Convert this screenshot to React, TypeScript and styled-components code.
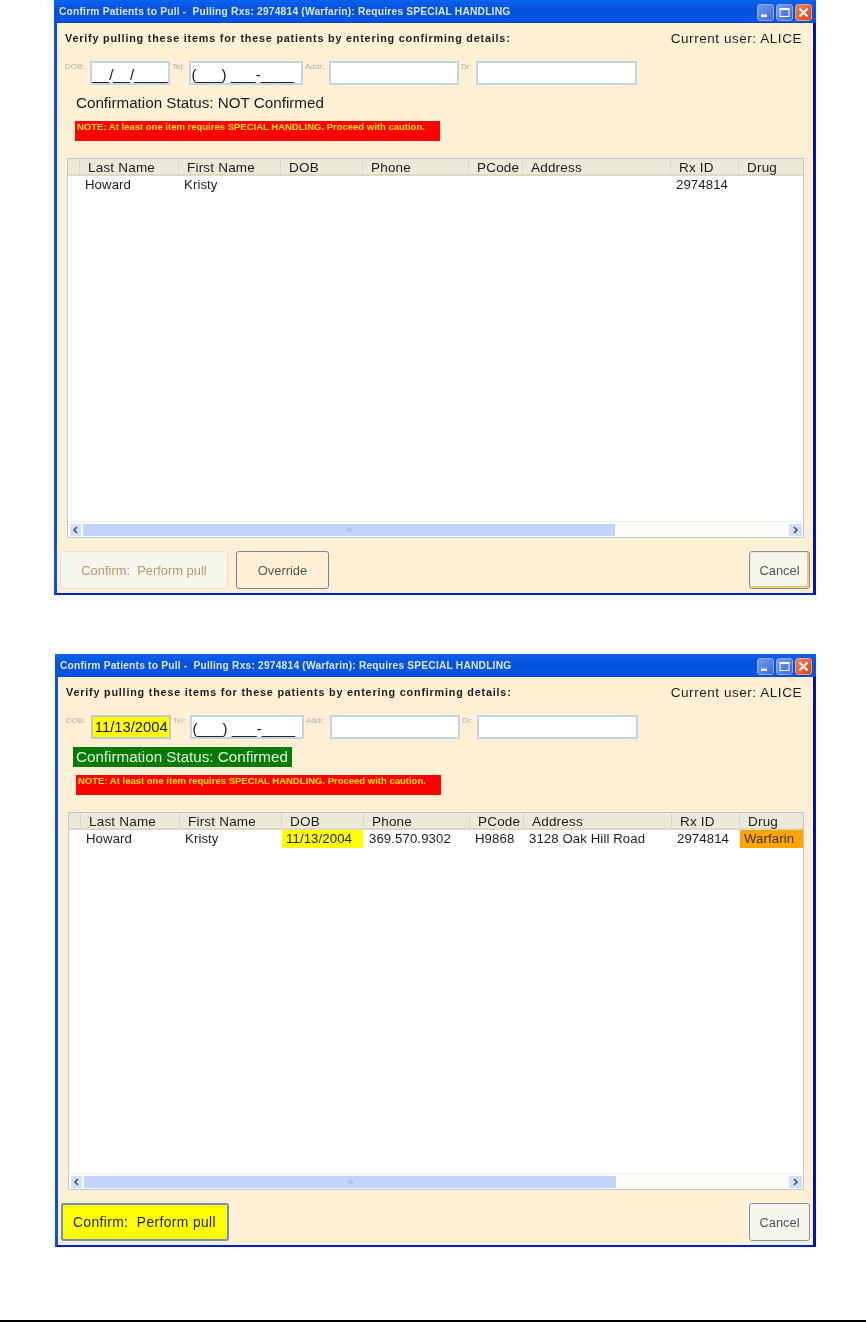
import React from "react";
import styled, { createGlobalStyle } from "styled-components";

const Global = createGlobalStyle`
  html, body { margin: 0; padding: 0; background: #fff; }
  body { font-family: "Liberation Sans", Arial, sans-serif; color: #1c1c1c; }
`;

const Page = styled.div`
  width: 866px;
  height: 1322px;
  display: flex;
  flex-direction: column;
  overflow: hidden;
`;

const Window = styled.section<{ $left: number; $height: number; $top: number }>`
  box-sizing: border-box;
  width: ${(p) => 816 - p.$left}px;
  height: ${(p) => p.$height}px;
  margin: ${(p) => p.$top}px 0 0 ${(p) => p.$left}px;
  display: flex;
  flex-direction: column;
  background: #ffefd5;
  border-style: solid;
  border-width: 0 3px 2px 3px;
  border-color: #0848e0 #0018b0 #0022b8 #0a50ee;
  filter: blur(0.4px);
`;

const TitleBar = styled.header`
  flex: none;
  height: 23px;
  margin: 0 -3px;
  padding: 0 4px 0 5px;
  display: flex;
  align-items: center;
  justify-content: space-between;
  background: linear-gradient(180deg, #0a66f0 0%, #0a5ce8 12%, #0450dc 50%, #0458e4 85%, #0348cc 100%);
`;

const TitleText = styled.h1`
  margin: 0;
  font-size: 10.2px;
  font-weight: 700;
  letter-spacing: 0.22px;
  color: #dce8ff;
  white-space: pre;
`;

const Controls = styled.div`
  display: flex;
  gap: 2px;
  margin-top: 2px;
`;

const Control = styled.div<{ $close?: boolean }>`
  width: 17px;
  height: 17px;
  box-sizing: border-box;
  border: 1px solid ${(p) => (p.$close ? "#f0a080" : "#8cb0f0")};
  border-radius: 3px;
  display: flex;
  align-items: center;
  justify-content: center;
  background: ${(p) =>
    p.$close
      ? "linear-gradient(135deg, #f2805c, #dc4414)"
      : "linear-gradient(135deg, #749cf0, #3c6ade)"};
`;

const Body = styled.div`
  flex: 1;
  min-height: 0;
  display: flex;
  flex-direction: column;
`;

const TopRow = styled.div`
  height: 30px;
  padding: 0 11px 0 8px;
  display: flex;
  align-items: center;
  justify-content: space-between;
`;

const Instruction = styled.p`
  margin: 0;
  font-size: 10.8px;
  font-weight: 700;
  letter-spacing: 0.8px;
  white-space: nowrap;
`;

const CurrentUser = styled.span`
  font-size: 13.5px;
  letter-spacing: 0.55px;
  white-space: nowrap;
`;

const FieldRow = styled.div`
  margin: 8px 0 0 8px;
  height: 24px;
  display: flex;
`;

const FieldLabel = styled.label<{ $w: number }>`
  width: ${(p) => p.$w}px;
  flex: none;
  font-size: 8px;
  line-height: 12px;
  color: #b0aea4;
  white-space: nowrap;
  overflow: visible;
`;

const Input = styled.div<{ $w: number; $filled?: boolean }>`
  box-sizing: border-box;
  width: ${(p) => p.$w}px;
  flex: none;
  height: 24px;
  margin-right: 2px;
  border: 2px solid ${(p) => (p.$filled ? "#c0ccc0" : "#c2d4e6")};
  background: ${(p) => (p.$filled ? "#ffff00" : "#fff")};
  font-size: ${(p) => (p.$filled ? "14.8px" : "15px")};
  line-height: ${(p) => (p.$filled ? "20px" : "23px")};
  padding-left: 0.5px;
  color: #141414;
  white-space: nowrap;
  text-align: ${(p) => (p.$filled ? "center" : "left")};
`;

const StatusRow = styled.div`
  margin-top: 8px;
  height: 20px;
  padding-left: 16px;
  display: flex;
  align-items: center;
`;

const Status = styled.div<{ $ok?: boolean }>`
  height: 20px;
  line-height: 20px;
  font-size: 15.2px;
  padding: 0 4px 0 3px;
  margin-left: ${(p) => (p.$ok ? "-1px" : "0")};
  white-space: nowrap;
  color: ${(p) => (p.$ok ? "#e4f6dc" : "#1c1c1c")};
  background: ${(p) => (p.$ok ? "#087a08" : "transparent")};
`;

const Notice = styled.div`
  box-sizing: border-box;
  width: 365px;
  height: 20px;
  margin: 8px 0 0 18px;
  padding: 0 0 0 2px;
  background: #ff0000;
  color: #ffe000;
  font-size: 9.5px;
  font-weight: 700;
  line-height: 11px;
  white-space: nowrap;
`;

const Table = styled.div`
  flex: 1;
  min-height: 0;
  box-sizing: border-box;
  margin: 17px 9px 0 10px;
  display: flex;
  flex-direction: column;
  background: #fff;
  border: 1px solid #b8cadc;
`;

const columns = "11px 99px 102px 82px 106px 54px 148px 68px 1fr";

const HeaderRow = styled.div`
  flex: none;
  height: 17px;
  display: grid;
  grid-template-columns: ${columns};
  background: #ece9d8;
  border-bottom: 2px solid #dcd8c4;
  box-sizing: border-box;
`;

const HeaderCell = styled.div`
  font-size: 13.5px;
  letter-spacing: 0.2px;
  line-height: 18px;
  height: 15px;
  padding-left: 8px;
  border-left: 1px solid #dcd8c8;
  white-space: nowrap;
`;

const HeaderSpacer = styled.div``;

const Rows = styled.div`
  flex: 1;
  min-height: 0;
`;

const DataRow = styled.div`
  height: 18px;
  display: grid;
  grid-template-columns: ${columns};
`;

const DataCell = styled.div<{ $bg?: string }>`
  font-size: 13.2px;
  letter-spacing: 0.1px;
  line-height: 18px;
  padding-left: ${(p) => (p.$bg ? "4px" : "6px")};
  background: ${(p) => p.$bg ?? "transparent"};
  color: ${(p) => (p.$bg === "#ffa500" ? "#3c3000" : "inherit")};
  white-space: nowrap;
  overflow: hidden;
  margin-left: ${(p) => (p.$bg ? "1px" : "0")};
`;

const Scrollbar = styled.div`
  flex: none;
  height: 16px;
  padding: 1px 1px 1px 2px;
  display: flex;
  align-items: center;
  background: #fbfbf8;
  border-top: 1px solid #f0efe6;
  box-sizing: border-box;
`;

const ScrollButton = styled.div<{ $w: number }>`
  flex: none;
  width: ${(p) => p.$w}px;
  height: 12px;
  display: flex;
  align-items: center;
  justify-content: center;
  background: #d4e0fa;
`;

const Thumb = styled.div`
  flex: none;
  width: 532px;
  height: 12px;
  margin-left: 2px;
  display: flex;
  align-items: center;
  justify-content: center;
  background: #c3d4fc;
`;

const Grip = styled.div`
  width: 5px;
  height: 4px;
  background: #b2c4ee;
`;

const TrackFill = styled.div`
  flex: 1;
`;

const Footer = styled.footer`
  flex: none;
  height: 42px;
  margin-top: 13px;
  padding: 0 3px 4px 3px;
  box-sizing: border-box;
  display: flex;
  gap: 8px;
`;

const Button = styled.button<{ $w: number; $kind: "disabled" | "ghost" | "default" | "active" | "plain" }>`
  box-sizing: border-box;
  width: ${(p) => p.$w}px;
  height: 38px;
  padding: 0;
  border-radius: 3px;
  font-family: inherit;
  font-size: 12.9px;
  border: 1.5px solid #8094ac;
  color: #565656;
  background: #f6f5ee;
  ${(p) =>
    p.$kind === "disabled" &&
    `border:1px solid #e8e0cf; color:#b89a66;`}
  ${(p) => p.$kind === "ghost" && `background:#ffefd5; border-color:#6c84a4;`}
  ${(p) =>
    p.$kind === "default" &&
    `box-shadow: inset -2px -2px 0 #fac868, inset 1px 1px 0 #fde4b4;`}
  ${(p) =>
    p.$kind === "active" &&
    `background:#ffff00; color:#242400; border:2px solid #7090c0; text-align:left; padding-left:10px; font-size:13.8px; letter-spacing:.4px;`}
`;

const Push = styled.div`
  flex: 1;
`;

const Line = styled.div`
  width: 866px;
  height: 2px;
  margin: 73px 0 0 0;
  background: #000;
`;

const MinIcon = () => (
  <svg width="13" height="13" viewBox="0 0 13 13"><rect x="2" y="8.5" width="6" height="2.5" fill="#fff" /></svg>
);
const MaxIcon = () => (
  <svg width="13" height="13" viewBox="0 0 13 13" fill="none"><rect x="2" y="2.5" width="9" height="8" stroke="#fff" strokeWidth="1" /><rect x="2" y="2" width="9" height="2" fill="#fff" /></svg>
);
const CloseIcon = () => (
  <svg width="13" height="13" viewBox="0 0 13 13"><path d="M2.5 2.5l8 8M10.5 2.5l-8 8" stroke="#fff" strokeWidth="2" /></svg>
);
const Chevron = ({ dir }: { dir: "l" | "r" }) => (
  <svg width="7" height="8" viewBox="0 0 7 8" fill="none">
    <path d={dir === "l" ? "M5 1L2 4l3 3" : "M2 1l3 3-3 3"} stroke="#3c5070" strokeWidth="1.6" />
  </svg>
);

const headers = ["Last Name", "First Name", "DOB", "Phone", "PCode", "Address", "Rx ID", "Drug"];
const TITLE = "Confirm Patients to Pull -  Pulling Rxs: 2974814 (Warfarin): Requires SPECIAL HANDLING";
const NOTE = "NOTE: At least one item requires SPECIAL HANDLING. Proceed with caution.";

type PanelProps = { confirmed?: boolean; left: number; top: number; height: number };

const Panel = ({ confirmed, left, top, height }: PanelProps) => (
  <Window $left={left} $top={top} $height={height}>
    <TitleBar>
      <TitleText>{TITLE}</TitleText>
      <Controls>
        <Control><MinIcon /></Control>
        <Control><MaxIcon /></Control>
        <Control $close><CloseIcon /></Control>
      </Controls>
    </TitleBar>
    <Body>
      <TopRow>
        <Instruction>Verify pulling these items for these patients by entering confirming details:</Instruction>
        <CurrentUser>Current user: ALICE</CurrentUser>
      </TopRow>
      <FieldRow>
        <FieldLabel $w={25}>DOB:</FieldLabel>
        <Input $w={80} $filled={confirmed}>{confirmed ? "11/13/2004" : "__/__/____"}</Input>
        <FieldLabel $w={17}>Tel:</FieldLabel>
        <Input $w={114}>(___) ___-____</Input>
        <FieldLabel $w={24}>Addr:</FieldLabel>
        <Input $w={130} />
        <FieldLabel $w={15}>Dr:</FieldLabel>
        <Input $w={161} />
      </FieldRow>
      <StatusRow>
        <Status $ok={confirmed}>Confirmation Status: {confirmed ? "Confirmed" : "NOT Confirmed"}</Status>
      </StatusRow>
      <Notice>{NOTE}</Notice>
      <Table>
        <HeaderRow>
          <HeaderSpacer />
          {headers.map((h) => (
            <HeaderCell key={h}>{h}</HeaderCell>
          ))}
        </HeaderRow>
        <Rows>
          <DataRow>
            <DataCell />
            <DataCell>Howard</DataCell>
            <DataCell>Kristy</DataCell>
            <DataCell $bg={confirmed ? "#ffff00" : undefined}>{confirmed ? "11/13/2004" : ""}</DataCell>
            <DataCell>{confirmed ? "369.570.9302" : ""}</DataCell>
            <DataCell>{confirmed ? "H9868" : ""}</DataCell>
            <DataCell>{confirmed ? "3128 Oak Hill Road" : ""}</DataCell>
            <DataCell>2974814</DataCell>
            <DataCell $bg={confirmed ? "#ffa500" : undefined}>{confirmed ? "Warfarin" : ""}</DataCell>
          </DataRow>
        </Rows>
        <Scrollbar>
          <ScrollButton $w={11}><Chevron dir="l" /></ScrollButton>
          <Thumb><Grip /></Thumb>
          <TrackFill />
          <ScrollButton $w={13}><Chevron dir="r" /></ScrollButton>
        </Scrollbar>
      </Table>
      <Footer>
        <Button $w={168} $kind={confirmed ? "active" : "disabled"}>Confirm:&nbsp; Perform pull</Button>
        {!confirmed && <Button $w={93} $kind="ghost">Override</Button>}
        <Push />
        <Button $w={61} $kind={confirmed ? "plain" : "default"}>Cancel</Button>
      </Footer>
    </Body>
  </Window>
);

export default function App() {
  return (
    <Page>
      <Global />
      <Panel left={54} top={0} height={595} />
      <Panel left={55} top={59} height={593} confirmed />
      <Line />
    </Page>
  );
}
